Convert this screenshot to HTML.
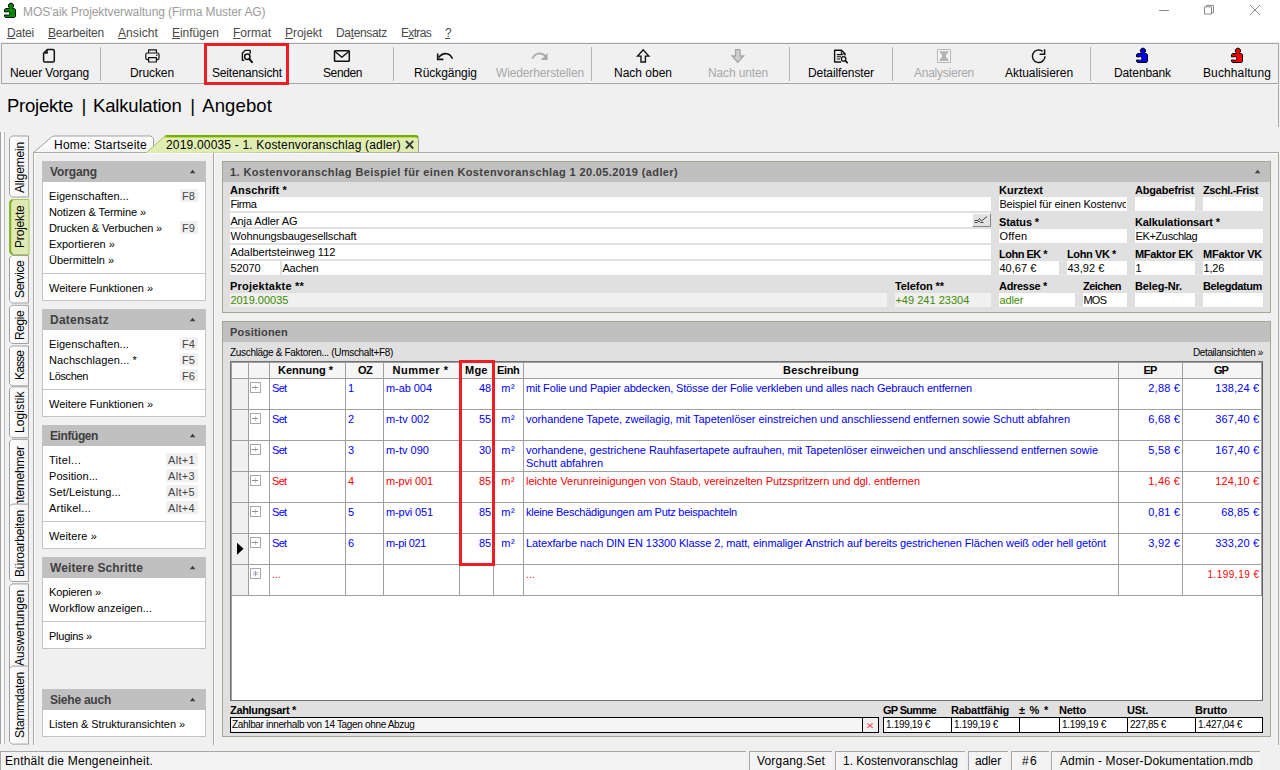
<!DOCTYPE html><html><head><meta charset="utf-8"><title>MOS'aik Projektverwaltung</title><style>
html,body{margin:0;padding:0;}body{width:1280px;height:770px;overflow:hidden;background:#f0f0f0;position:relative;font-family:"Liberation Sans",sans-serif;}
.a{position:absolute;}.t{position:absolute;white-space:nowrap;line-height:16px;height:16px;}
</style></head><body>
<div class="a" style="left:0px;top:0px;width:1280px;height:42px;background:#ffffff;"></div>
<svg class="a" style="left:1150px;top:0" width="130" height="22" viewBox="0 0 130 22" fill="none" stroke="#8a8a8a" stroke-width="1">
<path d="M9 10.5h10"/>
<path d="M54.500 6.800h7v7.200h-7z"/><path d="M56.500 6.800v-1.400h7v7.200h-2"/>
<path d="M100 5l10 10M110 5l-10 10"/>
</svg>
<div class="a" style="left:0.5px;top:43px;width:1278.5px;height:40.5px;background:#f0f0f0;border:1px solid #a5a5a5;box-sizing:border-box;"></div>
<div class="a" style="left:100px;top:47px;width:1px;height:34px;background:#b4b4b4;"></div>
<div class="a" style="left:393px;top:47px;width:1px;height:34px;background:#b4b4b4;"></div>
<div class="a" style="left:591px;top:47px;width:1px;height:34px;background:#b4b4b4;"></div>
<div class="a" style="left:789px;top:47px;width:1px;height:34px;background:#b4b4b4;"></div>
<div class="a" style="left:892px;top:47px;width:1px;height:34px;background:#b4b4b4;"></div>
<div class="a" style="left:1090px;top:47px;width:1px;height:34px;background:#b4b4b4;"></div>
<div class="a" style="left:204px;top:43px;width:85px;height:42px;border:3px solid #ee1c25;box-sizing:border-box;"></div>
<svg class="a" style="left:0;top:44px" width="1280" height="40" viewBox="0 44 1280 40" fill="none" stroke="#111" stroke-width="1.5" stroke-linejoin="round">
<!-- new doc -->
<path d="M47.300 49.600H53a1.300 1.300 0 0 1 1.300 1.300V60.800a1.300 1.300 0 0 1-1.300 1.300H44.900a1.300 1.300 0 0 1-1.300-1.300V53.300Z"/>
<path d="M47.800 50V53.800H44Z" fill="#111" stroke="none"/>
<!-- printer -->
<path d="M148.600 53V49.800H156.400V53" stroke-width="1.200"/>
<rect x="145.800" y="53" width="13.200" height="6.600" rx="1.600" stroke-width="1.200"/>
<rect x="148.600" y="57.600" width="7.800" height="4.400" fill="#f0f0f0" stroke-width="1.200"/>
<circle cx="156.800" cy="55.300" r="0.800" fill="#111" stroke="none"/>
<!-- page preview -->
<path d="M244.300 60.400H242.400V53.300L245 50.400H250.200V53.800" stroke-width="1.400"/>
<circle cx="247.300" cy="56.800" r="2.700" stroke-width="1.500"/>
<path d="M249.400 59L252 62.200" stroke-width="2" stroke-linecap="round"/>
<!-- envelope -->
<rect x="334.500" y="50.800" width="14.800" height="10.400" rx="0.800"/>
<path d="M334.800 51.200L341.900 57.200L349 51.200" stroke-width="1.400"/>
<!-- undo -->
<path d="M452.400 58.800C450.500 53.200 443.500 51.300 438.600 57.600" stroke-width="1.600"/>
<path d="M437.700 53.600V59.400H443.400" stroke-width="1.600" stroke-linejoin="miter"/>
<!-- redo (disabled) -->
<path d="M532.400 58.600C534.500 53.200 541.500 51.300 546.300 57" stroke="#aaaaaa" stroke-width="1.800"/>
<path d="M547.600 53V60H540.800Z" fill="#aaaaaa" stroke="none"/>
<!-- up arrow -->
<path d="M643.200 49.900L648.800 56.100H645.400V62H641V56.100H637.600Z" stroke-width="1.400" stroke-linejoin="miter"/>
<!-- down arrow (disabled) -->
<path d="M737.800 62.300L743.500 56H740V49.700H735.600V56H732.100Z" fill="#d0d0d0" stroke="#a4a4a4" stroke-width="1.300" stroke-linejoin="miter"/>
<!-- detail window -->
<path d="M841 62H834.600V50.300H841.500L845 53.800V55.500" stroke-width="1.400"/>
<path d="M841.300 50.500V54H844.800" stroke-width="1"/>
<path d="M836.800 54.600H842.600M836.800 56.800H841M836.800 59H840" stroke-width="1.100"/>
<circle cx="843.600" cy="58.900" r="2.200" stroke-width="1.300"/>
<path d="M845.300 60.700L847.200 62.600" stroke-width="1.800" stroke-linecap="round"/>
<!-- analyse (disabled) -->
<rect x="937.400" y="49.600" width="13.200" height="12.900" fill="#f6f6f6" stroke="#b4b4b4" stroke-width="1"/>
<path d="M939.500 51.200H948.500V52.300L946 55.200V56.800L948.700 60V61H939.300V60L942 56.800V55.200L939.500 52.300Z" fill="#b4b4b4" stroke="none"/>
<!-- refresh -->
<path d="M1045 56.300A6.300 6.300 0 1 1 1042.600 51.300" stroke-width="1.500"/>
<path d="M1044.600 49.300V54.300H1039.600" stroke-width="1.500" stroke-linejoin="miter"/>
</svg>
<svg class="a" style="left:0px;top:0px" width="20" height="20" viewBox="0 0 20 20"><path d="M3.800 12.400H6.900A1.400 1.400 0 1 1 6.900 14.500H3.800Z" fill="#fff"/><path d="M9.300 8.600H5.500L4.500 9.600V11.900H6.800A1.900 1.900 0 1 1 6.800 15H4.500V16.500L5.500 17.500H14.500L15.500 16.500V9.600L14.500 8.600H12.600V7.800A2.600 2.600 0 1 0 9.300 7.800Z" fill="#008c00" stroke="#000" stroke-width="1" stroke-linejoin="round"/></svg>
<svg class="a" style="left:1132px;top:45px" width="20" height="20" viewBox="0 0 20 20"><path d="M3.800 12.400H6.900A1.400 1.400 0 1 1 6.900 14.500H3.800Z" fill="#fff"/><path d="M9.300 8.600H5.500L4.500 9.600V11.900H6.800A1.900 1.900 0 1 1 6.800 15H4.500V16.500L5.500 17.500H14.500L15.500 16.500V9.600L14.500 8.600H12.600V7.800A2.600 2.600 0 1 0 9.300 7.800Z" fill="#0000f0" stroke="#000" stroke-width="1" stroke-linejoin="round"/></svg>
<svg class="a" style="left:1227px;top:45px" width="20" height="20" viewBox="0 0 20 20"><path d="M3.800 12.400H6.900A1.400 1.400 0 1 1 6.900 14.500H3.800Z" fill="#fff"/><path d="M9.300 8.600H5.500L4.500 9.600V11.900H6.800A1.900 1.900 0 1 1 6.800 15H4.500V16.500L5.500 17.500H14.500L15.500 16.500V9.600L14.500 8.600H12.600V7.800A2.600 2.600 0 1 0 9.300 7.800Z" fill="#f00000" stroke="#000" stroke-width="1" stroke-linejoin="round"/></svg>
<div class="a" style="left:1278px;top:85px;width:1px;height:42px;background:#a8a8a8;"></div>
<div class="a" style="left:0px;top:132px;width:1px;height:612px;background:#a0a0a0;"></div>
<div class="a" style="left:1px;top:132px;width:3px;height:612px;background:#f9f9f9;"></div>
<div class="a" style="left:4px;top:132px;width:1px;height:612px;background:#b8b8b8;"></div>
<svg class="a" style="left:0;top:0;z-index:0" width="40" height="750" viewBox="0 0 40 750"><defs><linearGradient id="vg" x1="0" x2="1" y1="0" y2="0"><stop offset="0" stop-color="#ffffff"/><stop offset="1" stop-color="#f2f2f2"/></linearGradient></defs><path d="M28.500 136.0H12L9.500 138.5V194.5L12 197.0H28.500Z" fill="url(#vg)" stroke="#a0a0a0" stroke-width="1"/><path d="M28.500 255.5H12L9.500 258V300.5L12 303.0H28.500Z" fill="url(#vg)" stroke="#a0a0a0" stroke-width="1"/><path d="M28.500 305.3H12L9.500 307.8V341L12 343.5H28.500Z" fill="url(#vg)" stroke="#a0a0a0" stroke-width="1"/><path d="M28.500 346.0H12L9.500 348.5V383.4L12 385.9H28.500Z" fill="url(#vg)" stroke="#a0a0a0" stroke-width="1"/><path d="M28.500 386.8H12L9.500 389.3V435.2L12 437.7H28.500Z" fill="url(#vg)" stroke="#a0a0a0" stroke-width="1"/><path d="M28.500 439.3H12L9.500 441.8V517L12 519.5H28.500Z" fill="url(#vg)" stroke="#a0a0a0" stroke-width="1"/><path d="M28.500 583.9H12L9.500 586.4V677L12 679.5H28.500Z" fill="url(#vg)" stroke="#a0a0a0" stroke-width="1"/></svg>
<svg class="a" style="left:0;top:0;z-index:2" width="40" height="750" viewBox="0 0 40 750"><defs><linearGradient id="vg" x1="0" x2="1" y1="0" y2="0"><stop offset="0" stop-color="#ffffff"/><stop offset="1" stop-color="#f2f2f2"/></linearGradient></defs><path d="M28.500 504.1H12L9.500 506.6V579L12 581.5H28.500Z" fill="url(#vg)" stroke="#a0a0a0" stroke-width="1"/><path d="M28.500 666.1H12L9.500 668.6V741.6L12 744.1H28.500Z" fill="url(#vg)" stroke="#a0a0a0" stroke-width="1"/></svg>
<svg class="a" style="left:0;top:0;z-index:4" width="40" height="750" viewBox="0 0 40 750"><defs><linearGradient id="vg" x1="0" x2="1" y1="0" y2="0"><stop offset="0" stop-color="#ffffff"/><stop offset="1" stop-color="#f2f2f2"/></linearGradient></defs><path d="M29 199.5H12.500L10 202V252L12.500 254.5H29Z" fill="#dfeab2" stroke="#a9c860" stroke-width="1"/><path d="M12.500 199.7L10.200 202V252L12.500 254.3" fill="none" stroke="#7fae1e" stroke-width="2"/></svg>
<div class="a" style="left:33px;top:152px;width:1246px;height:593px;background:#f0f0f0;border:1px solid #acaaa2;box-sizing:border-box;border-bottom:none;"></div>
<div class="a" style="left:34px;top:153px;width:1244px;height:1px;background:#fafafa;"></div>
<div class="a" style="left:34px;top:153px;width:1px;height:591px;background:#fafafa;"></div>
<svg class="a" style="left:30px;top:132px" width="400" height="22" viewBox="0 0 400 22">
<defs><linearGradient id="hg" x1="0" x2="0" y1="0" y2="1"><stop offset="0" stop-color="#ffffff"/><stop offset="1" stop-color="#f3f3f3"/></linearGradient></defs>
<path d="M3.500 20.500L21 5.500q1.500-1.500 4-1.500h96l2.500 2.500v14z" fill="url(#hg)" stroke="#a0a0a0" stroke-width="1"/>
<path d="M3 20.500h121" stroke="#acaaa2" stroke-width="1"/>
<path d="M116 21L134.800 4q1-1 2.500-1H386.300L388.500 5.200V20Z" fill="#e0edb2"/>
<path d="M116 21L134.800 4" stroke="#a9c860" stroke-width="1" fill="none"/>
<path d="M134 5.500H388" stroke="#b9da5c" stroke-width="1" fill="none"/>
<path d="M135.500 4H386.500L388.200 5.700" stroke="#76ae00" stroke-width="2" fill="none"/>
<path d="M388.500 6.500V20" stroke="#a0a0a0" stroke-width="1" fill="none"/>
</svg>
<svg class="a" style="left:404px;top:139px" width="12" height="12" viewBox="0 0 12 12"><path d="M1.900 1.900l7.300 7.600M9.200 1.900l-7.300 7.600" stroke="#3c3c3c" stroke-width="1.900"/></svg>
<div class="a" style="left:213px;top:153px;width:1px;height:592px;background:#a8a8a4;"></div>
<div class="a" style="left:214px;top:153px;width:1px;height:592px;background:#fafafa;"></div>
<div class="a" style="left:42px;top:161px;width:164px;height:21px;background:#c0c0c0;"></div>
<svg class="a" style="left:189px;top:169px" width="8" height="5" viewBox="0 0 8 5"><path d="M0.800 4.300L3.600 0.800L6.400 4.300z" fill="#404040"/></svg>
<div class="a" style="left:42px;top:182px;width:164px;height:119px;background:#ffffff;border:1px solid #c4c4c4;box-sizing:border-box;border-top:none;"></div>
<div class="a" style="left:180px;top:189px;width:18px;height:13px;background:#f0f0f0;"></div>
<div class="a" style="left:180px;top:221px;width:18px;height:13px;background:#f0f0f0;"></div>
<div class="a" style="left:43px;top:273px;width:162px;height:1px;background:#c4c4c4;"></div>
<div class="a" style="left:42px;top:309px;width:164px;height:21px;background:#c0c0c0;"></div>
<svg class="a" style="left:189px;top:317px" width="8" height="5" viewBox="0 0 8 5"><path d="M0.800 4.300L3.600 0.800L6.400 4.300z" fill="#404040"/></svg>
<div class="a" style="left:42px;top:330px;width:164px;height:87px;background:#ffffff;border:1px solid #c4c4c4;box-sizing:border-box;border-top:none;"></div>
<div class="a" style="left:180px;top:337px;width:18px;height:13px;background:#f0f0f0;"></div>
<div class="a" style="left:180px;top:353px;width:18px;height:13px;background:#f0f0f0;"></div>
<div class="a" style="left:180px;top:369px;width:18px;height:13px;background:#f0f0f0;"></div>
<div class="a" style="left:43px;top:389px;width:162px;height:1px;background:#c4c4c4;"></div>
<div class="a" style="left:42px;top:425px;width:164px;height:21px;background:#c0c0c0;"></div>
<svg class="a" style="left:189px;top:433px" width="8" height="5" viewBox="0 0 8 5"><path d="M0.800 4.300L3.600 0.800L6.400 4.300z" fill="#404040"/></svg>
<div class="a" style="left:42px;top:446px;width:164px;height:103px;background:#ffffff;border:1px solid #c4c4c4;box-sizing:border-box;border-top:none;"></div>
<div class="a" style="left:166px;top:453px;width:32px;height:13px;background:#f0f0f0;"></div>
<div class="a" style="left:166px;top:469px;width:32px;height:13px;background:#f0f0f0;"></div>
<div class="a" style="left:166px;top:485px;width:32px;height:13px;background:#f0f0f0;"></div>
<div class="a" style="left:166px;top:501px;width:32px;height:13px;background:#f0f0f0;"></div>
<div class="a" style="left:43px;top:521px;width:162px;height:1px;background:#c4c4c4;"></div>
<div class="a" style="left:42px;top:557px;width:164px;height:21px;background:#c0c0c0;"></div>
<svg class="a" style="left:189px;top:565px" width="8" height="5" viewBox="0 0 8 5"><path d="M0.800 4.300L3.600 0.800L6.400 4.300z" fill="#404040"/></svg>
<div class="a" style="left:42px;top:578px;width:164px;height:71px;background:#ffffff;border:1px solid #c4c4c4;box-sizing:border-box;border-top:none;"></div>
<div class="a" style="left:43px;top:621px;width:162px;height:1px;background:#c4c4c4;"></div>
<div class="a" style="left:42px;top:689px;width:164px;height:21px;background:#c0c0c0;"></div>
<svg class="a" style="left:189px;top:697px" width="8" height="5" viewBox="0 0 8 5"><path d="M0.800 4.300L3.600 0.800L6.400 4.300z" fill="#404040"/></svg>
<div class="a" style="left:42px;top:710px;width:164px;height:27px;background:#ffffff;border:1px solid #c4c4c4;box-sizing:border-box;border-top:none;"></div>
<div class="a" style="left:222px;top:161px;width:1049px;height:152px;background:#e0e0e0;border:1px solid #a8a498;box-sizing:border-box;"></div>
<div class="a" style="left:223px;top:162px;width:1047px;height:19.5px;background:#c0c0c0;"></div>
<svg class="a" style="left:1254px;top:169px" width="8" height="5" viewBox="0 0 8 5"><path d="M0.800 4.300L3.600 0.800L6.400 4.300z" fill="#404040"/></svg>
<div class="a" style="left:230px;top:197px;width:760.6px;height:14px;background:#ffffff;"></div>
<div class="a" style="left:230px;top:213px;width:760.6px;height:14px;background:#ffffff;"></div>
<div class="a" style="left:230px;top:229px;width:760.6px;height:14px;background:#ffffff;"></div>
<div class="a" style="left:230px;top:245px;width:760.6px;height:14px;background:#ffffff;"></div>
<div class="a" style="left:230px;top:261px;width:50px;height:14px;background:#ffffff;"></div>
<div class="a" style="left:282px;top:261px;width:708.6px;height:14px;background:#ffffff;"></div>
<div class="a" style="left:971.5px;top:213px;width:19.5px;height:13.5px;background:#e2e2e2;border:1px solid #888;box-sizing:border-box;border-top-color:#fafafa;border-left-color:#fafafa;"></div>
<svg class="a" style="left:973px;top:215px" width="16" height="10" viewBox="0 0 16 10" fill="none" stroke="#333" stroke-width="0.900"><path d="M1.500 5.500h3.500l1.500-2l2 2.500l5.500-4.500"/><path d="M1.500 7.500h3l1.500-1.500l1.500 1.500h3"/></svg>
<div class="a" style="left:230px;top:293px;width:657px;height:14px;background:#f0f0f0;"></div>
<div class="a" style="left:895px;top:293px;width:95.60000000000002px;height:14px;background:#f0f0f0;"></div>
<div class="a" style="left:999px;top:197px;width:128px;height:14px;background:#ffffff;"></div>
<div class="a" style="left:1135px;top:197px;width:60px;height:14px;background:#ffffff;"></div>
<div class="a" style="left:1203px;top:197px;width:60px;height:14px;background:#ffffff;"></div>
<div class="a" style="left:999px;top:229px;width:128px;height:14px;background:#ffffff;"></div>
<div class="a" style="left:1135px;top:229px;width:128px;height:14px;background:#ffffff;"></div>
<div class="a" style="left:999px;top:261px;width:60px;height:14px;background:#ffffff;"></div>
<div class="a" style="left:1067px;top:261px;width:60px;height:14px;background:#ffffff;"></div>
<div class="a" style="left:1135px;top:261px;width:60px;height:14px;background:#ffffff;"></div>
<div class="a" style="left:1203px;top:261px;width:60px;height:14px;background:#ffffff;"></div>
<div class="a" style="left:999px;top:293px;width:76px;height:14px;background:#ffffff;"></div>
<div class="a" style="left:1083px;top:293px;width:44px;height:14px;background:#ffffff;"></div>
<div class="a" style="left:1135px;top:293px;width:60px;height:14px;background:#ffffff;"></div>
<div class="a" style="left:1203px;top:293px;width:60px;height:14px;background:#ffffff;"></div>
<div class="a" style="left:222px;top:321px;width:1049px;height:415.5px;background:#e0e0e0;border:1px solid #a8a498;box-sizing:border-box;"></div>
<div class="a" style="left:223px;top:322px;width:1047px;height:19.5px;background:#c0c0c0;"></div>
<div class="a" style="left:230px;top:361px;width:1033px;height:340px;background:#ffffff;border:1px solid #707070;box-sizing:border-box;"></div>
<div class="a" style="left:231px;top:362px;width:1031px;height:1px;background:#a0a0a0;"></div>
<div class="a" style="left:231px;top:362px;width:1px;height:338px;background:#a0a0a0;"></div>
<div class="a" style="left:1262px;top:361px;width:1px;height:340px;background:#606060;"></div>
<div class="a" style="left:232px;top:363px;width:1029px;height:15px;background:#f5f5f5;"></div>
<div class="a" style="left:232px;top:378px;width:16px;height:217px;background:#f0f0f0;"></div>
<div class="a" style="left:248px;top:362px;width:1px;height:233px;background:#a0a0a0;"></div>
<div class="a" style="left:269px;top:362px;width:1px;height:233px;background:#a0a0a0;"></div>
<div class="a" style="left:345px;top:362px;width:1px;height:233px;background:#a0a0a0;"></div>
<div class="a" style="left:383px;top:362px;width:1px;height:233px;background:#a0a0a0;"></div>
<div class="a" style="left:459px;top:362px;width:1px;height:233px;background:#a0a0a0;"></div>
<div class="a" style="left:493px;top:362px;width:1px;height:233px;background:#a0a0a0;"></div>
<div class="a" style="left:523px;top:362px;width:1px;height:233px;background:#a0a0a0;"></div>
<div class="a" style="left:1118px;top:362px;width:1px;height:233px;background:#a0a0a0;"></div>
<div class="a" style="left:1182px;top:362px;width:1px;height:233px;background:#a0a0a0;"></div>
<div class="a" style="left:1261px;top:362px;width:1px;height:233px;background:#a0a0a0;"></div>
<div class="a" style="left:231px;top:378px;width:1031px;height:1px;background:#a0a0a0;"></div>
<div class="a" style="left:231px;top:409px;width:1031px;height:1px;background:#a0a0a0;"></div>
<div class="a" style="left:231px;top:440px;width:1031px;height:1px;background:#a0a0a0;"></div>
<div class="a" style="left:231px;top:471px;width:1031px;height:1px;background:#a0a0a0;"></div>
<div class="a" style="left:231px;top:502px;width:1031px;height:1px;background:#a0a0a0;"></div>
<div class="a" style="left:231px;top:533px;width:1031px;height:1px;background:#a0a0a0;"></div>
<div class="a" style="left:231px;top:564px;width:1031px;height:1px;background:#a0a0a0;"></div>
<div class="a" style="left:231px;top:595px;width:1031px;height:1px;background:#a0a0a0;"></div>
<div class="a" style="left:250px;top:382px;width:11px;height:11px;background:#ffffff;border:1px solid #a8a8a8;box-sizing:border-box;"></div>
<div class="a" style="left:255px;top:385px;width:1px;height:5px;background:#c8ccd8;"></div>
<div class="a" style="left:252px;top:387px;width:6px;height:1px;background:#8c8c8c;"></div>
<div class="a" style="left:250px;top:413px;width:11px;height:11px;background:#ffffff;border:1px solid #a8a8a8;box-sizing:border-box;"></div>
<div class="a" style="left:255px;top:416px;width:1px;height:5px;background:#c8ccd8;"></div>
<div class="a" style="left:252px;top:418px;width:6px;height:1px;background:#8c8c8c;"></div>
<div class="a" style="left:250px;top:444px;width:11px;height:11px;background:#ffffff;border:1px solid #a8a8a8;box-sizing:border-box;"></div>
<div class="a" style="left:255px;top:447px;width:1px;height:5px;background:#c8ccd8;"></div>
<div class="a" style="left:252px;top:449px;width:6px;height:1px;background:#8c8c8c;"></div>
<div class="a" style="left:250px;top:475px;width:11px;height:11px;background:#ffffff;border:1px solid #a8a8a8;box-sizing:border-box;"></div>
<div class="a" style="left:255px;top:478px;width:1px;height:5px;background:#c8ccd8;"></div>
<div class="a" style="left:252px;top:480px;width:6px;height:1px;background:#8c8c8c;"></div>
<div class="a" style="left:250px;top:506px;width:11px;height:11px;background:#ffffff;border:1px solid #a8a8a8;box-sizing:border-box;"></div>
<div class="a" style="left:255px;top:509px;width:1px;height:5px;background:#c8ccd8;"></div>
<div class="a" style="left:252px;top:511px;width:6px;height:1px;background:#8c8c8c;"></div>
<div class="a" style="left:250px;top:537px;width:11px;height:11px;background:#ffffff;border:1px solid #a8a8a8;box-sizing:border-box;"></div>
<div class="a" style="left:255px;top:540px;width:1px;height:5px;background:#c8ccd8;"></div>
<div class="a" style="left:252px;top:542px;width:6px;height:1px;background:#8c8c8c;"></div>
<div class="a" style="left:250px;top:568px;width:11px;height:11px;background:#ffffff;border:1px solid #a8a8a8;box-sizing:border-box;"></div>
<svg class="a" style="left:252px;top:570px" width="7" height="7" viewBox="0 0 7 7"><path d="M3.500 0.800V6.200M1.100 2.100L5.900 4.900M5.900 2.100L1.100 4.900" stroke="#9aa0b0" stroke-width="0.900" fill="none"/></svg>
<svg class="a" style="left:236px;top:542px" width="9" height="14" viewBox="0 0 9 14"><path d="M1 0.800L7.600 6.800L1 12.800z" fill="#000"/></svg>
<div class="a" style="left:459px;top:360px;width:36px;height:205.7px;border:3px solid #ee1c25;box-sizing:border-box;"></div>
<div class="a" style="left:230px;top:717px;width:649px;height:16px;background:#f5f5f5;border:1px solid #000;box-sizing:border-box;"></div>
<div class="a" style="left:862px;top:718px;width:1px;height:14px;background:#000000;"></div>
<div class="a" style="left:863px;top:718px;width:15px;height:14px;background:#f0f0f0;"></div>
<svg class="a" style="left:866px;top:722px" width="9" height="8" viewBox="0 0 9 8"><path d="M1.300 1.300l5.400 4.600M6.700 1.300l-5.400 4.600" stroke="#ff4848" stroke-width="1.100"/></svg>
<div class="a" style="left:883px;top:717px;width:69px;height:16px;background:#ffffff;border:1px solid #000;box-sizing:border-box;"></div>
<div class="a" style="left:951px;top:717px;width:69px;height:16px;background:#ffffff;border:1px solid #000;box-sizing:border-box;"></div>
<div class="a" style="left:1019px;top:717px;width:41px;height:16px;background:#ffffff;border:1px solid #000;box-sizing:border-box;"></div>
<div class="a" style="left:1059px;top:717px;width:69px;height:16px;background:#ffffff;border:1px solid #000;box-sizing:border-box;"></div>
<div class="a" style="left:1127px;top:717px;width:69px;height:16px;background:#ffffff;border:1px solid #000;box-sizing:border-box;"></div>
<div class="a" style="left:1195px;top:717px;width:68px;height:16px;background:#ffffff;border:1px solid #000;box-sizing:border-box;"></div>
<div class="a" style="left:0px;top:745px;width:1280px;height:25px;background:#f0f0f0;"></div>
<div class="a" style="left:0px;top:751px;width:746px;height:19px;background:#f4f4f4;border:1px solid #a8a8a8;box-sizing:border-box;border-right:none;border-bottom:none;"></div>
<div class="a" style="left:749px;top:751px;width:83px;height:19px;background:#f4f4f4;border:1px solid #a8a8a8;box-sizing:border-box;border-right:none;border-bottom:none;"></div>
<div class="a" style="left:835px;top:751px;width:130px;height:19px;background:#f4f4f4;border:1px solid #a8a8a8;box-sizing:border-box;border-right:none;border-bottom:none;"></div>
<div class="a" style="left:968px;top:751px;width:40px;height:19px;background:#f4f4f4;border:1px solid #a8a8a8;box-sizing:border-box;border-right:none;border-bottom:none;"></div>
<div class="a" style="left:1011px;top:751px;width:38px;height:19px;background:#f4f4f4;border:1px solid #a8a8a8;box-sizing:border-box;border-right:none;border-bottom:none;"></div>
<div class="a" style="left:1051px;top:751px;width:209px;height:19px;background:#f4f4f4;border:1px solid #a8a8a8;box-sizing:border-box;border-right:none;border-bottom:none;"></div>
<span class="t" id="t0" style="top:4.24px;font-size:12px;color:#9c9c9c;letter-spacing:-0.074px;left:23px;">MOS'aik Projektverwaltung (Firma Muster AG)</span>
<span class="t" id="t1" style="top:24.84px;font-size:12px;color:#4a4a4a;letter-spacing:-0.206px;left:7px;"><u>D</u>atei</span>
<span class="t" id="t2" style="top:24.84px;font-size:12px;color:#4a4a4a;letter-spacing:-0.206px;left:48px;"><u>B</u>earbeiten</span>
<span class="t" id="t3" style="top:24.84px;font-size:12px;color:#4a4a4a;letter-spacing:0.089px;left:118px;"><u>A</u>nsicht</span>
<span class="t" id="t4" style="top:24.84px;font-size:12px;color:#4a4a4a;letter-spacing:-0.049px;left:172px;"><u>E</u>inf&uuml;gen</span>
<span class="t" id="t5" style="top:24.84px;font-size:12px;color:#4a4a4a;letter-spacing:-0.005px;left:233px;"><u>F</u>ormat</span>
<span class="t" id="t6" style="top:24.84px;font-size:12px;color:#4a4a4a;letter-spacing:-0.051px;left:285px;"><u>P</u>rojekt</span>
<span class="t" id="t7" style="top:24.84px;font-size:12px;color:#4a4a4a;letter-spacing:-0.339px;left:336px;">Da<u>t</u>ensatz</span>
<span class="t" id="t8" style="top:24.84px;font-size:12px;color:#4a4a4a;letter-spacing:-0.672px;left:401px;">E<u>x</u>tras</span>
<span class="t" id="t9" style="top:24.84px;font-size:12px;color:#4a4a4a;letter-spacing:-1.688px;left:445px;"><u>?</u></span>
<span class="t" id="t10" style="top:64.84px;font-size:12px;color:#000;letter-spacing:-0.133px;left:10px;">Neuer Vorgang</span>
<span class="t" id="t11" style="top:64.84px;font-size:12px;color:#000;letter-spacing:-0.098px;left:130px;">Drucken</span>
<span class="t" id="t12" style="top:64.84px;font-size:12px;color:#000;letter-spacing:-0.157px;left:212px;">Seitenansicht</span>
<span class="t" id="t13" style="top:64.84px;font-size:12px;color:#000;letter-spacing:-0.396px;left:323px;">Senden</span>
<span class="t" id="t14" style="top:64.84px;font-size:12px;color:#000;letter-spacing:-0.037px;left:414px;">R&uuml;ckg&auml;ngig</span>
<span class="t" id="t15" style="top:64.84px;font-size:12px;color:#a8a8a8;letter-spacing:-0.128px;left:496px;">Wiederherstellen</span>
<span class="t" id="t16" style="top:64.84px;font-size:12px;color:#000;letter-spacing:-0.005px;left:614px;">Nach oben</span>
<span class="t" id="t17" style="top:64.84px;font-size:12px;color:#a8a8a8;letter-spacing:-0.139px;left:708px;">Nach unten</span>
<span class="t" id="t18" style="top:64.84px;font-size:12px;color:#000;letter-spacing:-0.106px;left:808px;">Detailfenster</span>
<span class="t" id="t19" style="top:64.84px;font-size:12px;color:#a8a8a8;letter-spacing:-0.246px;left:914px;">Analysieren</span>
<span class="t" id="t20" style="top:64.84px;font-size:12px;color:#000;letter-spacing:-0.054px;left:1005px;">Aktualisieren</span>
<span class="t" id="t21" style="top:64.84px;font-size:12px;color:#000;letter-spacing:-0.116px;left:1114px;">Datenbank</span>
<span class="t" id="t22" style="top:64.84px;font-size:12px;color:#000;letter-spacing:0.115px;left:1203px;">Buchhaltung</span>
<span class="t" id="t23" style="top:98.29px;font-size:18.5px;color:#000;letter-spacing:-0.234px;left:7px;">Projekte</span>
<span class="t" id="t24" style="top:98.29px;font-size:18.5px;color:#000;left:81.4px;">|</span>
<span class="t" id="t25" style="top:98.29px;font-size:18.5px;color:#000;letter-spacing:-0.174px;left:93px;">Kalkulation</span>
<span class="t" id="t26" style="top:98.29px;font-size:18.5px;color:#000;left:190.3px;">|</span>
<span class="t" id="t27" style="top:98.29px;font-size:18.5px;color:#000;letter-spacing:0.123px;left:202.2px;">Angebot</span>
<span class="t" id="t28" style="font-size:12px;color:#000;letter-spacing:-0.189px;left:12.34px;top:193px;transform:rotate(-90deg);transform-origin:0 0;z-index:1;">Allgemein</span>
<span class="t" id="t29" style="font-size:12px;color:#000;letter-spacing:-0.374px;left:12.34px;top:298px;transform:rotate(-90deg);transform-origin:0 0;z-index:1;">Service</span>
<span class="t" id="t30" style="font-size:12px;color:#000;letter-spacing:-0.432px;left:12.34px;top:339.6px;transform:rotate(-90deg);transform-origin:0 0;z-index:1;">Regie</span>
<span class="t" id="t31" style="font-size:12px;color:#000;letter-spacing:-0.872px;left:12.34px;top:380.3px;transform:rotate(-90deg);transform-origin:0 0;z-index:1;">Kasse</span>
<span class="t" id="t32" style="font-size:12px;color:#000;letter-spacing:0.102px;left:12.34px;top:433.3px;transform:rotate(-90deg);transform-origin:0 0;z-index:1;">Logistik</span>
<span class="t" id="t33" style="font-size:12px;color:#000;letter-spacing:-0.094px;left:12.34px;top:515.4px;transform:rotate(-90deg);transform-origin:0 0;z-index:1;">Unternehmer</span>
<span class="t" id="t34" style="font-size:12px;color:#000;letter-spacing:-0.143px;left:12.34px;top:577px;transform:rotate(-90deg);transform-origin:0 0;z-index:3;">B&uuml;roarbeiten</span>
<span class="t" id="t35" style="font-size:12px;color:#000;letter-spacing:-0.060px;left:12.34px;top:666px;transform:rotate(-90deg);transform-origin:0 0;z-index:1;">Auswertungen</span>
<span class="t" id="t36" style="font-size:12px;color:#000;letter-spacing:-0.195px;left:12.34px;top:738px;transform:rotate(-90deg);transform-origin:0 0;z-index:3;">Stammdaten</span>
<span class="t" id="t37" style="font-size:12px;color:#000;letter-spacing:-0.179px;left:12.34px;top:248.2px;transform:rotate(-90deg);transform-origin:0 0;z-index:5;">Projekte</span>
<span class="t" id="t38" style="top:136.84px;font-size:12px;color:#000;letter-spacing:0.227px;left:54px;">Home: Startseite</span>
<span class="t" id="t39" style="top:136.84px;font-size:12px;color:#000;letter-spacing:0.183px;left:166px;">2019.00035 - 1. Kostenvoranschlag (adler)</span>
<span class="t" id="t40" style="top:163.84px;font-size:12px;color:#404040;font-weight:bold;letter-spacing:-0.112px;left:50px;">Vorgang</span>
<span class="t" id="t41" style="top:188.19px;font-size:11px;color:#000;letter-spacing:0.069px;left:49px;">Eigenschaften...</span>
<span class="t" id="t42" style="top:188.19px;font-size:11px;color:#444;letter-spacing:0.078px;left:182px;">F8</span>
<span class="t" id="t43" style="top:204.19px;font-size:11px;color:#000;letter-spacing:-0.098px;left:49px;">Notizen &amp; Termine &raquo;</span>
<span class="t" id="t44" style="top:220.19px;font-size:11px;color:#000;letter-spacing:-0.152px;left:49px;">Drucken &amp; Verbuchen &raquo;</span>
<span class="t" id="t45" style="top:220.19px;font-size:11px;color:#444;letter-spacing:0.078px;left:182px;">F9</span>
<span class="t" id="t46" style="top:236.19px;font-size:11px;color:#000;letter-spacing:0.043px;left:49px;">Exportieren &raquo;</span>
<span class="t" id="t47" style="top:252.19px;font-size:11px;color:#000;letter-spacing:-0.032px;left:49px;">&Uuml;bermitteln &raquo;</span>
<span class="t" id="t48" style="top:280.19px;font-size:11px;color:#000;letter-spacing:-0.018px;left:49px;">Weitere Funktionen &raquo;</span>
<span class="t" id="t49" style="top:311.84px;font-size:12px;color:#404040;font-weight:bold;letter-spacing:0.257px;left:50px;">Datensatz</span>
<span class="t" id="t50" style="top:336.19px;font-size:11px;color:#000;letter-spacing:0.069px;left:49px;">Eigenschaften...</span>
<span class="t" id="t51" style="top:336.19px;font-size:11px;color:#444;letter-spacing:0.078px;left:182px;">F4</span>
<span class="t" id="t52" style="top:352.19px;font-size:11px;color:#000;letter-spacing:0.105px;left:49px;">Nachschlagen... *</span>
<span class="t" id="t53" style="top:352.19px;font-size:11px;color:#444;letter-spacing:0.078px;left:182px;">F5</span>
<span class="t" id="t54" style="top:368.19px;font-size:11px;color:#000;letter-spacing:-0.371px;left:49px;">L&ouml;schen</span>
<span class="t" id="t55" style="top:368.19px;font-size:11px;color:#444;letter-spacing:0.078px;left:182px;">F6</span>
<span class="t" id="t56" style="top:396.19px;font-size:11px;color:#000;letter-spacing:-0.018px;left:49px;">Weitere Funktionen &raquo;</span>
<span class="t" id="t57" style="top:427.84px;font-size:12px;color:#404040;font-weight:bold;letter-spacing:-0.416px;left:50px;">Einf&uuml;gen</span>
<span class="t" id="t58" style="top:452.19px;font-size:11px;color:#000;letter-spacing:0.307px;left:49px;">Titel...</span>
<span class="t" id="t59" style="top:452.19px;font-size:11px;color:#444;letter-spacing:0.322px;left:168px;">Alt+1</span>
<span class="t" id="t60" style="top:468.19px;font-size:11px;color:#000;letter-spacing:0.062px;left:49px;">Position...</span>
<span class="t" id="t61" style="top:468.19px;font-size:11px;color:#444;letter-spacing:0.322px;left:168px;">Alt+3</span>
<span class="t" id="t62" style="top:484.19px;font-size:11px;color:#000;letter-spacing:0.111px;left:49px;">Set/Leistung...</span>
<span class="t" id="t63" style="top:484.19px;font-size:11px;color:#444;letter-spacing:0.322px;left:168px;">Alt+5</span>
<span class="t" id="t64" style="top:500.19px;font-size:11px;color:#000;letter-spacing:0.227px;left:49px;">Artikel...</span>
<span class="t" id="t65" style="top:500.19px;font-size:11px;color:#444;letter-spacing:0.322px;left:168px;">Alt+4</span>
<span class="t" id="t66" style="top:528.19px;font-size:11px;color:#000;letter-spacing:0.125px;left:49px;">Weitere &raquo;</span>
<span class="t" id="t67" style="top:559.84px;font-size:12px;color:#404040;font-weight:bold;letter-spacing:0.115px;left:50px;">Weitere Schritte</span>
<span class="t" id="t68" style="top:584.19px;font-size:11px;color:#000;letter-spacing:-0.122px;left:49px;">Kopieren &raquo;</span>
<span class="t" id="t69" style="top:600.19px;font-size:11px;color:#000;letter-spacing:0.055px;left:49px;">Workflow anzeigen...</span>
<span class="t" id="t70" style="top:628.19px;font-size:11px;color:#000;letter-spacing:-0.252px;left:49px;">Plugins &raquo;</span>
<span class="t" id="t71" style="top:691.84px;font-size:12px;color:#404040;font-weight:bold;letter-spacing:-0.236px;left:50px;">Siehe auch</span>
<span class="t" id="t72" style="top:716.19px;font-size:11px;color:#000;letter-spacing:-0.056px;left:49px;">Listen &amp; Strukturansichten &raquo;</span>
<span class="t" id="t73" style="top:164.19px;font-size:11px;color:#404040;font-weight:bold;letter-spacing:0.383px;left:230px;">1. Kostenvoranschlag Beispiel f&uuml;r einen Kostenvoranschlag 1 20.05.2019 (adler)</span>
<span class="t" id="t74" style="top:181.69px;font-size:11px;color:#000;font-weight:bold;letter-spacing:0.125px;left:230px;">Anschrift *</span>
<span class="t" id="t75" style="top:196.19px;font-size:11px;color:#000;letter-spacing:-0.422px;left:230.4px;">Firma</span>
<span class="t" id="t76" style="top:213.19px;font-size:11px;color:#000;letter-spacing:-0.115px;left:230.4px;">Anja Adler AG</span>
<span class="t" id="t77" style="top:228.19px;font-size:11px;color:#000;letter-spacing:-0.124px;left:230.4px;">Wohnungsbaugesellschaft</span>
<span class="t" id="t78" style="top:244.19px;font-size:11px;color:#000;letter-spacing:0.001px;left:230.4px;">Adalbertsteinweg 112</span>
<span class="t" id="t79" style="top:260.19px;font-size:11px;color:#000;letter-spacing:-0.119px;left:230.4px;">52070</span>
<span class="t" id="t80" style="top:260.19px;font-size:11px;color:#000;letter-spacing:-0.219px;left:282.4px;">Aachen</span>
<span class="t" id="t81" style="top:277.69px;font-size:11px;color:#000;font-weight:bold;letter-spacing:0.219px;left:230px;">Projektakte **</span>
<span class="t" id="t82" style="top:292.19px;font-size:11px;color:#3d8b00;letter-spacing:-0.013px;left:230.4px;">2019.00035</span>
<span class="t" id="t83" style="top:277.69px;font-size:11px;color:#000;font-weight:bold;letter-spacing:-0.092px;left:895px;">Telefon **</span>
<span class="t" id="t84" style="top:292.19px;font-size:11px;color:#3d8b00;letter-spacing:0.022px;left:895.4px;">+49 241 23304</span>
<span class="t" id="t85" style="top:181.69px;font-size:11px;color:#000;font-weight:bold;letter-spacing:-0.002px;left:999px;">Kurztext</span>
<span class="t" id="t86" style="top:196.19px;font-size:11px;color:#000;letter-spacing:-0.178px;left:999.4px;overflow:hidden;width:127px;">Beispiel f&uuml;r einen Kostenvo</span>
<span class="t" id="t87" style="top:181.69px;font-size:11px;color:#000;font-weight:bold;letter-spacing:-0.193px;left:1135px;">Abgabefrist</span>
<span class="t" id="t88" style="top:181.69px;font-size:11px;color:#000;font-weight:bold;letter-spacing:-0.358px;left:1203px;">Zschl.-Frist</span>
<span class="t" id="t89" style="top:213.69px;font-size:11px;color:#000;font-weight:bold;letter-spacing:-0.121px;left:999px;">Status *</span>
<span class="t" id="t90" style="top:228.19px;font-size:11px;color:#000;letter-spacing:0.256px;left:999.4px;">Offen</span>
<span class="t" id="t91" style="top:213.69px;font-size:11px;color:#000;font-weight:bold;letter-spacing:-0.107px;left:1135px;">Kalkulationsart *</span>
<span class="t" id="t92" style="top:228.19px;font-size:11px;color:#000;letter-spacing:-0.339px;left:1135.4px;">EK+Zuschlag</span>
<span class="t" id="t93" style="top:245.69px;font-size:11px;color:#000;font-weight:bold;letter-spacing:-0.507px;left:999px;">Lohn EK *</span>
<span class="t" id="t94" style="top:260.19px;font-size:11px;color:#000;letter-spacing:0.042px;left:999.4px;">40,67 &euro;</span>
<span class="t" id="t95" style="top:245.69px;font-size:11px;color:#000;font-weight:bold;letter-spacing:-0.396px;left:1067px;">Lohn VK *</span>
<span class="t" id="t96" style="top:260.19px;font-size:11px;color:#000;letter-spacing:0.042px;left:1067.4px;">43,92 &euro;</span>
<span class="t" id="t97" style="top:245.69px;font-size:11px;color:#000;font-weight:bold;letter-spacing:-0.312px;left:1135px;">MFaktor EK</span>
<span class="t" id="t98" style="top:260.19px;font-size:11px;color:#000;letter-spacing:-1.125px;left:1135.4px;">1</span>
<span class="t" id="t99" style="top:245.69px;font-size:11px;color:#000;font-weight:bold;letter-spacing:-0.212px;left:1203px;">MFaktor VK</span>
<span class="t" id="t100" style="top:260.19px;font-size:11px;color:#000;letter-spacing:-0.105px;left:1203.4px;">1,26</span>
<span class="t" id="t101" style="top:277.69px;font-size:11px;color:#000;font-weight:bold;letter-spacing:-0.307px;left:999px;">Adresse *</span>
<span class="t" id="t102" style="top:292.19px;font-size:11px;color:#3d8b00;letter-spacing:-0.094px;left:999.4px;">adler</span>
<span class="t" id="t103" style="top:277.69px;font-size:11px;color:#000;font-weight:bold;letter-spacing:-0.511px;left:1083px;">Zeichen</span>
<span class="t" id="t104" style="top:292.19px;font-size:11px;color:#000;letter-spacing:-0.688px;left:1083.4px;">MOS</span>
<span class="t" id="t105" style="top:277.69px;font-size:11px;color:#000;font-weight:bold;letter-spacing:-0.144px;left:1135px;">Beleg-Nr.</span>
<span class="t" id="t106" style="top:277.69px;font-size:11px;color:#000;font-weight:bold;letter-spacing:-0.397px;left:1203px;">Belegdatum</span>
<span class="t" id="t107" style="top:324.19px;font-size:11px;color:#404040;font-weight:bold;letter-spacing:0.177px;left:230px;">Positionen</span>
<span class="t" id="t108" style="top:344.84px;font-size:10px;color:#000;letter-spacing:-0.319px;left:230px;">Zuschl&auml;ge &amp; Faktoren... (Umschalt+F8)</span>
<span class="t" id="t109" style="top:344.84px;font-size:10px;color:#000;letter-spacing:-0.395px;left:1193px;">Detailansichten &raquo;</span>
<span class="t" id="t110" style="top:362.19px;font-size:11px;color:#000;font-weight:bold;letter-spacing:0.000px;left:278.0px;">Kennung *</span>
<span class="t" id="t111" style="top:362.19px;font-size:11px;color:#000;font-weight:bold;letter-spacing:-0.641px;left:358.0px;">OZ</span>
<span class="t" id="t112" style="top:362.19px;font-size:11px;color:#000;font-weight:bold;letter-spacing:0.504px;left:392.5px;">Nummer *</span>
<span class="t" id="t113" style="top:362.19px;font-size:11px;color:#000;font-weight:bold;letter-spacing:0.167px;left:465.05px;">Mge</span>
<span class="t" id="t114" style="top:362.19px;font-size:11px;color:#000;font-weight:bold;letter-spacing:-0.336px;left:496.95px;">Einh</span>
<span class="t" id="t115" style="top:362.19px;font-size:11px;color:#000;font-weight:bold;letter-spacing:0.220px;left:783.0px;">Beschreibung</span>
<span class="t" id="t116" style="top:362.19px;font-size:11px;color:#000;font-weight:bold;letter-spacing:-0.844px;left:1143.5px;">EP</span>
<span class="t" id="t117" style="top:362.19px;font-size:11px;color:#000;font-weight:bold;letter-spacing:-0.953px;left:1214.0px;">GP</span>
<span class="t" id="t118" style="top:380.19px;font-size:11px;color:#0000ff;letter-spacing:-0.672px;left:272px;">Set</span>
<span class="t" id="t119" style="top:380.19px;font-size:11px;color:#0000ff;letter-spacing:-0.125px;left:348px;">1</span>
<span class="t" id="t120" style="top:380.19px;font-size:11px;color:#0000ff;letter-spacing:-0.061px;left:386px;">m-ab 004</span>
<span class="t" id="t121" style="top:380.19px;font-size:11px;color:#0000ff;letter-spacing:-0.125px;right:789.12px;">48</span>
<span class="t" id="t122" style="top:380.19px;font-size:11px;color:#0000ff;letter-spacing:0.586px;left:308.29px;width:400px;text-align:center;">m&sup2;</span>
<span class="t" id="t123" style="top:380.19px;font-size:11px;color:#0000ff;letter-spacing:-0.152px;left:526px;">mit Folie und Papier abdecken, St&ouml;sse der Folie verkleben und alles nach Gebrauch entfernen</span>
<span class="t" id="t124" style="top:380.19px;font-size:11px;color:#0000ff;letter-spacing:0.234px;right:99.77px;">2,88 &euro;</span>
<span class="t" id="t125" style="top:380.19px;font-size:11px;color:#0000ff;letter-spacing:0.146px;right:20.85px;">138,24 &euro;</span>
<span class="t" id="t126" style="top:411.19px;font-size:11px;color:#0000ff;letter-spacing:-0.672px;left:272px;">Set</span>
<span class="t" id="t127" style="top:411.19px;font-size:11px;color:#0000ff;letter-spacing:-0.125px;left:348px;">2</span>
<span class="t" id="t128" style="top:411.19px;font-size:11px;color:#0000ff;letter-spacing:0.088px;left:386px;">m-tv 002</span>
<span class="t" id="t129" style="top:411.19px;font-size:11px;color:#0000ff;letter-spacing:-0.125px;right:789.12px;">55</span>
<span class="t" id="t130" style="top:411.19px;font-size:11px;color:#0000ff;letter-spacing:0.586px;left:308.29px;width:400px;text-align:center;">m&sup2;</span>
<span class="t" id="t131" style="top:411.19px;font-size:11px;color:#0000ff;letter-spacing:-0.055px;left:526px;">vorhandene Tapete, zweilagig, mit Tapetenl&ouml;ser einstreichen und anschliessend entfernen sowie Schutt abfahren</span>
<span class="t" id="t132" style="top:411.19px;font-size:11px;color:#0000ff;letter-spacing:0.234px;right:99.77px;">6,68 &euro;</span>
<span class="t" id="t133" style="top:411.19px;font-size:11px;color:#0000ff;letter-spacing:0.146px;right:20.85px;">367,40 &euro;</span>
<span class="t" id="t134" style="top:442.19px;font-size:11px;color:#0000ff;letter-spacing:-0.672px;left:272px;">Set</span>
<span class="t" id="t135" style="top:442.19px;font-size:11px;color:#0000ff;letter-spacing:-0.125px;left:348px;">3</span>
<span class="t" id="t136" style="top:442.19px;font-size:11px;color:#0000ff;letter-spacing:0.025px;left:386px;">m-tv 090</span>
<span class="t" id="t137" style="top:442.19px;font-size:11px;color:#0000ff;letter-spacing:-0.125px;right:789.12px;">30</span>
<span class="t" id="t138" style="top:442.19px;font-size:11px;color:#0000ff;letter-spacing:0.586px;left:308.29px;width:400px;text-align:center;">m&sup2;</span>
<span class="t" id="t139" style="top:442.19px;font-size:11px;color:#0000ff;letter-spacing:-0.051px;left:526px;">vorhandene, gestrichene Rauhfasertapete aufrauhen, mit Tapetenl&ouml;ser einweichen und anschliessend entfernen sowie</span>
<span class="t" id="t140" style="top:455.19px;font-size:11px;color:#0000ff;letter-spacing:-0.045px;left:526px;">Schutt abfahren</span>
<span class="t" id="t141" style="top:442.19px;font-size:11px;color:#0000ff;letter-spacing:0.234px;right:99.77px;">5,58 &euro;</span>
<span class="t" id="t142" style="top:442.19px;font-size:11px;color:#0000ff;letter-spacing:0.146px;right:20.85px;">167,40 &euro;</span>
<span class="t" id="t143" style="top:473.19px;font-size:11px;color:#ff0000;letter-spacing:-0.672px;left:272px;">Set</span>
<span class="t" id="t144" style="top:473.19px;font-size:11px;color:#ff0000;letter-spacing:-0.125px;left:348px;">4</span>
<span class="t" id="t145" style="top:473.19px;font-size:11px;color:#ff0000;letter-spacing:-0.144px;left:386px;">m-pvi 001</span>
<span class="t" id="t146" style="top:473.19px;font-size:11px;color:#ff0000;letter-spacing:-0.125px;right:789.12px;">85</span>
<span class="t" id="t147" style="top:473.19px;font-size:11px;color:#ff0000;letter-spacing:0.586px;left:308.29px;width:400px;text-align:center;">m&sup2;</span>
<span class="t" id="t148" style="top:473.19px;font-size:11px;color:#ff0000;letter-spacing:-0.051px;left:526px;">leichte Verunreinigungen von Staub, vereinzelten Putzspritzern und dgl. entfernen</span>
<span class="t" id="t149" style="top:473.19px;font-size:11px;color:#ff0000;letter-spacing:0.234px;right:99.77px;">1,46 &euro;</span>
<span class="t" id="t150" style="top:473.19px;font-size:11px;color:#ff0000;letter-spacing:0.146px;right:20.85px;">124,10 &euro;</span>
<span class="t" id="t151" style="top:504.19px;font-size:11px;color:#0000ff;letter-spacing:-0.672px;left:272px;">Set</span>
<span class="t" id="t152" style="top:504.19px;font-size:11px;color:#0000ff;letter-spacing:-0.125px;left:348px;">5</span>
<span class="t" id="t153" style="top:504.19px;font-size:11px;color:#0000ff;letter-spacing:-0.144px;left:386px;">m-pvi 051</span>
<span class="t" id="t154" style="top:504.19px;font-size:11px;color:#0000ff;letter-spacing:-0.125px;right:789.12px;">85</span>
<span class="t" id="t155" style="top:504.19px;font-size:11px;color:#0000ff;letter-spacing:0.586px;left:308.29px;width:400px;text-align:center;">m&sup2;</span>
<span class="t" id="t156" style="top:504.19px;font-size:11px;color:#0000ff;letter-spacing:-0.262px;left:526px;">kleine Besch&auml;digungen am Putz beispachteln</span>
<span class="t" id="t157" style="top:504.19px;font-size:11px;color:#0000ff;letter-spacing:0.234px;right:99.77px;">0,81 &euro;</span>
<span class="t" id="t158" style="top:504.19px;font-size:11px;color:#0000ff;letter-spacing:0.185px;right:20.81px;">68,85 &euro;</span>
<span class="t" id="t159" style="top:535.19px;font-size:11px;color:#0000ff;letter-spacing:-0.672px;left:272px;">Set</span>
<span class="t" id="t160" style="top:535.19px;font-size:11px;color:#0000ff;letter-spacing:-0.125px;left:348px;">6</span>
<span class="t" id="t161" style="top:535.19px;font-size:11px;color:#0000ff;letter-spacing:-0.350px;left:386px;">m-pi 021</span>
<span class="t" id="t162" style="top:535.19px;font-size:11px;color:#0000ff;letter-spacing:-0.125px;right:789.12px;">85</span>
<span class="t" id="t163" style="top:535.19px;font-size:11px;color:#0000ff;letter-spacing:0.586px;left:308.29px;width:400px;text-align:center;">m&sup2;</span>
<span class="t" id="t164" style="top:535.19px;font-size:11px;color:#0000ff;letter-spacing:-0.105px;left:526px;">Latexfarbe nach DIN EN 13300 Klasse 2, matt, einmaliger Anstrich auf bereits gestrichenen Fl&auml;chen wei&szlig; oder hell get&ouml;nt</span>
<span class="t" id="t165" style="top:535.19px;font-size:11px;color:#0000ff;letter-spacing:0.234px;right:99.77px;">3,92 &euro;</span>
<span class="t" id="t166" style="top:535.19px;font-size:11px;color:#0000ff;letter-spacing:0.146px;right:20.85px;">333,20 &euro;</span>
<span class="t" id="t167" style="top:566.53px;font-size:10px;color:#ff0000;letter-spacing:0.219px;left:272px;">...</span>
<span class="t" id="t168" style="top:566.53px;font-size:10px;color:#ff0000;letter-spacing:0.219px;left:526px;">...</span>
<span class="t" id="t169" style="top:566.53px;font-size:10px;color:#ff0000;letter-spacing:0.473px;right:20.53px;">1.199,19 &euro;</span>
<span class="t" id="t170" style="top:702.19px;font-size:11px;color:#000;font-weight:bold;letter-spacing:-0.331px;left:230px;">Zahlungsart *</span>
<span class="t" id="t171" style="top:717.03px;font-size:10px;color:#000;letter-spacing:-0.332px;left:232px;">Zahlbar innerhalb von 14 Tagen ohne Abzug</span>
<span class="t" id="t172" style="top:702.19px;font-size:11px;color:#000;font-weight:bold;letter-spacing:-0.688px;left:883px;">GP Summe</span>
<span class="t" id="t173" style="top:702.19px;font-size:11px;color:#000;font-weight:bold;letter-spacing:-0.227px;left:951px;">Rabattf&auml;hig</span>
<span class="t" id="t174" style="top:702.19px;font-size:11px;color:#000;font-weight:bold;letter-spacing:0.756px;left:1019px;">&plusmn; % *</span>
<span class="t" id="t175" style="top:702.19px;font-size:11px;color:#000;font-weight:bold;letter-spacing:-0.222px;left:1059px;">Netto</span>
<span class="t" id="t176" style="top:702.19px;font-size:11px;color:#000;font-weight:bold;letter-spacing:-0.250px;left:1127px;">USt.</span>
<span class="t" id="t177" style="top:702.19px;font-size:11px;color:#000;font-weight:bold;letter-spacing:-0.167px;left:1195px;">Brutto</span>
<span class="t" id="t178" style="top:717.03px;font-size:10px;color:#000;letter-spacing:-0.327px;left:886px;">1.199,19 &euro;</span>
<span class="t" id="t179" style="top:717.03px;font-size:10px;color:#000;letter-spacing:-0.327px;left:954px;">1.199,19 &euro;</span>
<span class="t" id="t180" style="top:717.03px;font-size:10px;color:#000;letter-spacing:-0.327px;left:1062px;">1.199,19 &euro;</span>
<span class="t" id="t181" style="top:717.03px;font-size:10px;color:#000;letter-spacing:-0.367px;left:1130px;">227,85 &euro;</span>
<span class="t" id="t182" style="top:717.03px;font-size:10px;color:#000;letter-spacing:-0.327px;left:1198px;">1.427,04 &euro;</span>
<span class="t" id="t183" style="top:752.84px;font-size:12px;color:#000;letter-spacing:0.227px;left:5px;">Enth&auml;lt die Mengeneinheit.</span>
<span class="t" id="t184" style="top:752.84px;font-size:12px;color:#000;letter-spacing:0.176px;left:757px;">Vorgang.Set</span>
<span class="t" id="t185" style="top:752.84px;font-size:12px;color:#000;letter-spacing:-0.020px;left:843px;">1. Kostenvoranschlag</span>
<span class="t" id="t186" style="top:752.84px;font-size:12px;color:#000;letter-spacing:-0.138px;left:975px;">adler</span>
<span class="t" id="t187" style="top:752.84px;font-size:12px;color:#000;letter-spacing:1.320px;left:1022px;">#6</span>
<span class="t" id="t188" style="top:752.84px;font-size:12px;color:#000;letter-spacing:0.116px;left:1060px;">Admin - Moser-Dokumentation.mdb</span>
</body></html>
